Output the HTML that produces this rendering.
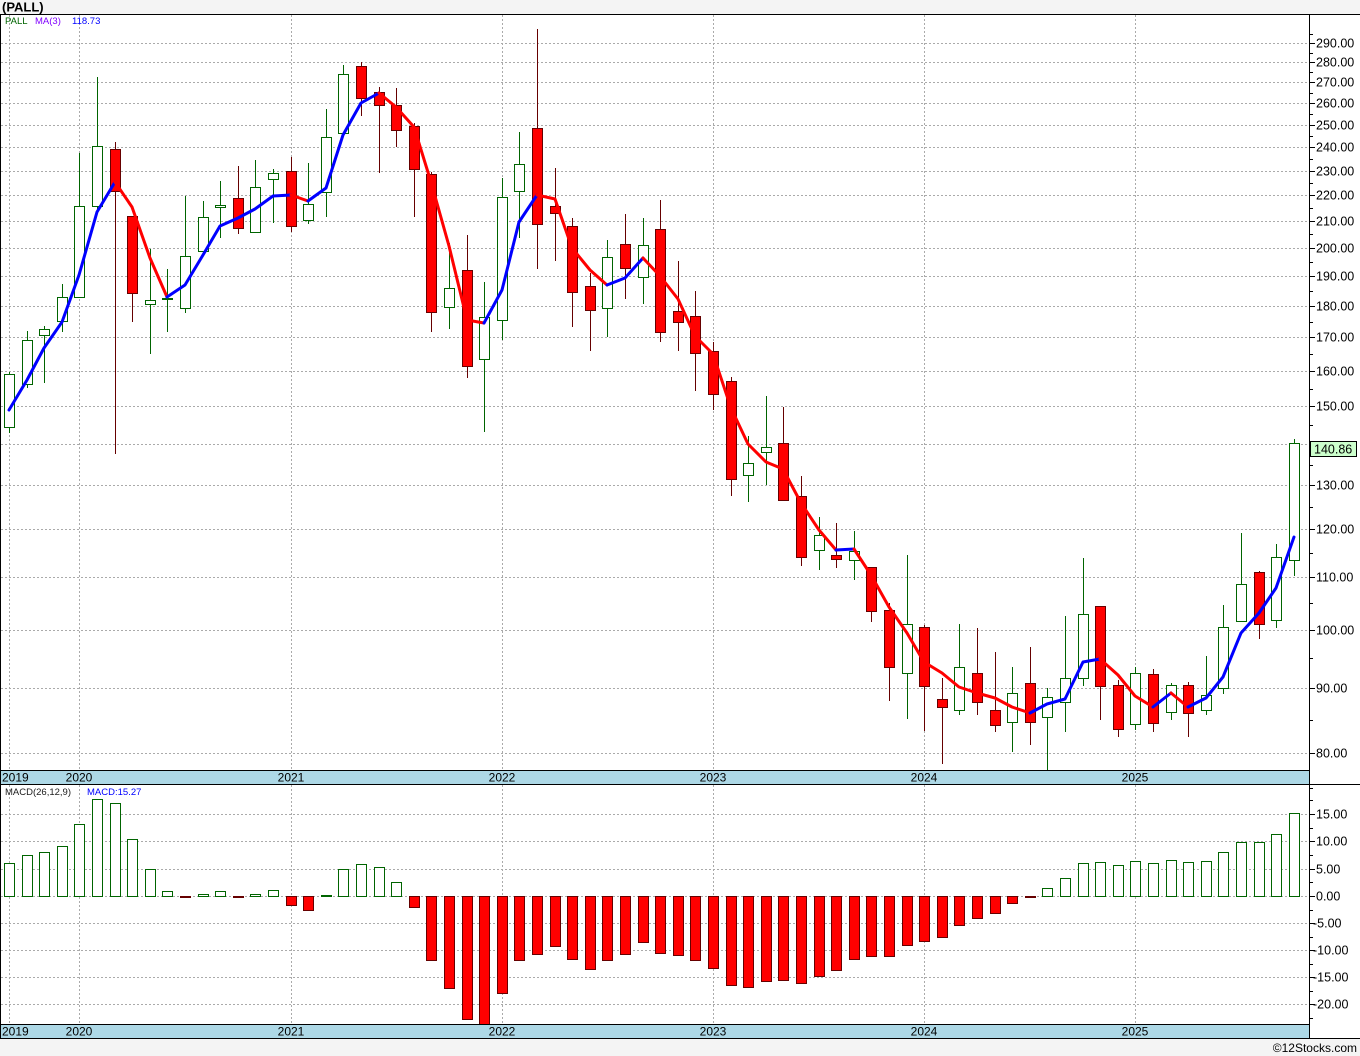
<!DOCTYPE html>
<html><head><meta charset="utf-8"><style>
html,body{margin:0;padding:0;background:#fff;}
svg{display:block;}
text{font-family:"Liberation Sans","DejaVu Sans",sans-serif;}
</style></head><body>
<svg width="1360" height="1056" viewBox="0 0 1360 1056" xmlns="http://www.w3.org/2000/svg">
<rect x="0" y="0" width="1360" height="1056" fill="#fff"/>
<rect x="0" y="0" width="1360" height="14" fill="#f4f4f4"/>
<text x="2" y="11.5" font-size="13" font-weight="bold" fill="#000">(PALL)</text>
<rect x="0" y="1038" width="1360" height="18" fill="#f4f4f4"/>
<text x="1357" y="1052" font-size="12" fill="#000" text-anchor="end">©12Stocks.com</text>

<!-- price grid -->
<g stroke="#aaa" stroke-width="1" stroke-dasharray="2,2">
<path d="M1 753.5H1309 M1 688.5H1309 M1 630.5H1309 M1 577.5H1309 M1 529.5H1309 M1 485.5H1309 M1 444.5H1309 M1 406.5H1309 M1 371.5H1309 M1 337.5H1309 M1 306.5H1309 M1 276.5H1309 M1 248.5H1309 M1 221.5H1309 M1 195.5H1309 M1 171.5H1309 M1 147.5H1309 M1 125.5H1309 M1 103.5H1309 M1 82.5H1309 M1 62.5H1309 M1 43.5H1309"/>
<path d="M9.5 15V770 M79.5 15V770 M291.5 15V770 M502.5 15V770 M713.5 15V770 M924.5 15V770 M1135.5 15V770"/>
<path d="M1 814.5H1309 M1 841.5H1309 M1 869.5H1309 M1 896.5H1309 M1 923.5H1309 M1 950.5H1309 M1 977.5H1309 M1 1004.5H1309"/>
<path d="M9.5 785V1024 M79.5 785V1024 M291.5 785V1024 M502.5 785V1024 M713.5 785V1024 M924.5 785V1024 M1135.5 785V1024"/>
</g>

<!-- candles wicks -->
<path fill="none" stroke="#006400" stroke-width="1" d="M9.5 372V433 M27.5 331V388 M44.5 326V383 M62.5 284V332 M79.5 153V297 M97.5 77V210 M150.5 249V354 M167.5 269V332 M185.5 196V313 M203.5 201V255 M220.5 181V238 M255.5 160V232 M273.5 169V223 M308.5 163V224 M326.5 109V217 M343.5 65V133 M449.5 243V329 M484.5 282V432 M502.5 178V340 M519.5 132V238 M607.5 240V337 M643.5 218V304 M748.5 436V502 M766.5 396V485 M819.5 517V570 M854.5 531V580 M907.5 555V719 M959.5 624V715 M1012.5 667V752 M1047.5 688V770 M1065.5 616V732 M1083.5 558V686 M1135.5 667V730 M1171.5 683V720 M1206.5 656V715 M1223.5 605V694 M1241.5 533V621 M1276.5 544V628 M1294.5 439V576"/>
<path fill="none" stroke="#660000" stroke-width="1" d="M115.5 142V454 M132.5 216V322 M238.5 166V234 M291.5 157V232 M361.5 62V116 M379.5 87V173 M396.5 88V147 M414.5 123V217 M431.5 172V332 M467.5 235V378 M537.5 29V269 M555.5 168V261 M572.5 218V327 M590.5 273V351 M625.5 214V299 M660.5 200V342 M678.5 261V351 M695.5 291V391 M713.5 342V410 M731.5 377V496 M783.5 407V501 M801.5 476V566 M836.5 523V568 M871.5 567V622 M889.5 603V701 M924.5 625V731 M942.5 678V764 M977.5 628V715 M995.5 652V732 M1030.5 647V745 M1100.5 606V720 M1118.5 680V737 M1153.5 669V732 M1188.5 682V737 M1259.5 571V639"/>

<!-- green bodies -->
<g fill="#fff" stroke="#006400" stroke-width="1">
<rect x="4.5" y="374.5" width="10" height="53"/>
<rect x="22.5" y="340.5" width="10" height="44"/>
<rect x="39.5" y="329.5" width="10" height="6"/>
<rect x="57.5" y="297.5" width="10" height="24"/>
<rect x="74.5" y="206.5" width="10" height="91"/>
<rect x="92.5" y="146.5" width="10" height="60"/>
<rect x="145.5" y="300.5" width="10" height="4"/>
<rect x="162.5" y="298.5" width="10" height="1"/>
<rect x="180.5" y="256.5" width="10" height="52"/>
<rect x="198.5" y="217.5" width="10" height="34"/>
<rect x="215.5" y="205.5" width="10" height="2"/>
<rect x="250.5" y="187.5" width="10" height="45"/>
<rect x="268.5" y="173.5" width="10" height="6"/>
<rect x="303.5" y="204.5" width="10" height="16"/>
<rect x="321.5" y="137.5" width="10" height="55"/>
<rect x="338.5" y="74.5" width="10" height="59"/>
<rect x="444.5" y="288.5" width="10" height="19"/>
<rect x="479.5" y="317.5" width="10" height="42"/>
<rect x="497.5" y="197.5" width="10" height="123"/>
<rect x="514.5" y="164.5" width="10" height="27"/>
<rect x="602.5" y="257.5" width="10" height="51"/>
<rect x="638.5" y="245.5" width="10" height="32"/>
<rect x="743.5" y="463.5" width="10" height="12"/>
<rect x="761.5" y="447.5" width="10" height="5"/>
<rect x="814.5" y="535.5" width="10" height="15"/>
<rect x="849.5" y="551.5" width="10" height="9"/>
<rect x="902.5" y="624.5" width="10" height="49"/>
<rect x="954.5" y="667.5" width="10" height="43"/>
<rect x="1007.5" y="693.5" width="10" height="29"/>
<rect x="1042.5" y="697.5" width="10" height="20"/>
<rect x="1060.5" y="678.5" width="10" height="24"/>
<rect x="1078.5" y="614.5" width="10" height="64"/>
<rect x="1130.5" y="673.5" width="10" height="51"/>
<rect x="1166.5" y="685.5" width="10" height="27"/>
<rect x="1201.5" y="695.5" width="10" height="15"/>
<rect x="1218.5" y="627.5" width="10" height="61"/>
<rect x="1236.5" y="584.5" width="10" height="37"/>
<rect x="1271.5" y="557.5" width="10" height="63"/>
<rect x="1289.5" y="443.5" width="10" height="117"/>
</g>
<!-- red bodies -->
<g fill="#ff0000" stroke="#660000" stroke-width="1">
<rect x="110.5" y="149.5" width="10" height="42"/>
<rect x="127.5" y="216.5" width="10" height="77"/>
<rect x="233.5" y="198.5" width="10" height="30"/>
<rect x="286.5" y="171.5" width="10" height="55"/>
<rect x="356.5" y="66.5" width="10" height="32"/>
<rect x="374.5" y="92.5" width="10" height="13"/>
<rect x="391.5" y="105.5" width="10" height="25"/>
<rect x="409.5" y="126.5" width="10" height="43"/>
<rect x="426.5" y="174.5" width="10" height="138"/>
<rect x="462.5" y="270.5" width="10" height="96"/>
<rect x="532.5" y="128.5" width="10" height="96"/>
<rect x="550.5" y="206.5" width="10" height="7"/>
<rect x="567.5" y="226.5" width="10" height="66"/>
<rect x="585.5" y="286.5" width="10" height="24"/>
<rect x="620.5" y="244.5" width="10" height="24"/>
<rect x="655.5" y="229.5" width="10" height="103"/>
<rect x="673.5" y="311.5" width="10" height="11"/>
<rect x="690.5" y="316.5" width="10" height="37"/>
<rect x="708.5" y="351.5" width="10" height="43"/>
<rect x="726.5" y="381.5" width="10" height="98"/>
<rect x="778.5" y="443.5" width="10" height="57"/>
<rect x="796.5" y="496.5" width="10" height="61"/>
<rect x="831.5" y="555.5" width="10" height="4"/>
<rect x="866.5" y="567.5" width="10" height="44"/>
<rect x="884.5" y="610.5" width="10" height="57"/>
<rect x="919.5" y="627.5" width="10" height="59"/>
<rect x="937.5" y="699.5" width="10" height="8"/>
<rect x="972.5" y="673.5" width="10" height="29"/>
<rect x="990.5" y="710.5" width="10" height="15"/>
<rect x="1025.5" y="683.5" width="10" height="39"/>
<rect x="1095.5" y="606.5" width="10" height="80"/>
<rect x="1113.5" y="685.5" width="10" height="44"/>
<rect x="1148.5" y="674.5" width="10" height="49"/>
<rect x="1183.5" y="685.5" width="10" height="28"/>
<rect x="1254.5" y="572.5" width="10" height="52"/>
</g>

<!-- MA(3) -->
<g fill="none" stroke-width="3" stroke-linejoin="round" stroke-linecap="round">
<polyline stroke="#0000ff" points="9,410 27,380 44,348 62,322 79,275 97,212 115,182"/>
<polyline stroke="#ff0000" points="115,182 132,207 150,258 167,297"/>
<polyline stroke="#0000ff" points="167,297 185,285 203,255 220,226 238,218 255,209 273,196 291,195"/>
<polyline stroke="#ff0000" points="291,195 308,201"/>
<polyline stroke="#0000ff" points="308,201 326,188 343,135 361,103 379,93"/>
<polyline stroke="#ff0000" points="379,93 396,107 414,127 431,182 449,246 467,320 484,323"/>
<polyline stroke="#0000ff" points="484,323 502,290 519,222 537,195"/>
<polyline stroke="#ff0000" points="537,195 555,199 572,248 590,270 607,285"/>
<polyline stroke="#0000ff" points="607,285 625,278 643,258"/>
<polyline stroke="#ff0000" points="643,258 660,276 678,299 695,336 713,354 731,408 748,444 766,462 783,469 801,503 819,530 836,550"/>
<polyline stroke="#0000ff" points="836,550 854,549"/>
<polyline stroke="#ff0000" points="854,549 871,575 889,607 907,633 924,662 942,673 959,687 977,693 995,698 1012,707 1030,713"/>
<polyline stroke="#0000ff" points="1030,713 1047,704 1065,699 1083,662 1100,659"/>
<polyline stroke="#ff0000" points="1100,659 1118,675 1135,696 1153,707"/>
<polyline stroke="#0000ff" points="1153,707 1171,693"/>
<polyline stroke="#ff0000" points="1171,693 1188,707"/>
<polyline stroke="#0000ff" points="1188,707 1206,698 1223,677 1241,633 1259,613 1276,588 1294,537"/>
</g>

<text x="5" y="24" font-size="9.5" fill="#006400">PALL</text>
<text x="35" y="24" font-size="9.5" fill="#8000ff">MA(3)</text>
<text x="72" y="24" font-size="9.5" fill="#0000ff">118.73</text>

<!-- MACD bars -->
<g fill="#fff" stroke="#006400" stroke-width="1">
<rect x="4.5" y="863.5" width="10" height="33"/>
<rect x="22.5" y="855.5" width="10" height="41"/>
<rect x="39.5" y="852.5" width="10" height="44"/>
<rect x="57.5" y="846.5" width="10" height="50"/>
<rect x="74.5" y="824.5" width="10" height="72"/>
<rect x="92.5" y="799.5" width="10" height="97"/>
<rect x="110.5" y="803.5" width="10" height="93"/>
<rect x="127.5" y="839.5" width="10" height="57"/>
<rect x="145.5" y="869.5" width="10" height="27"/>
<rect x="162.5" y="891.5" width="10" height="5"/>
<rect x="198.5" y="894.5" width="10" height="2"/>
<rect x="215.5" y="891.5" width="10" height="5"/>
<rect x="250.5" y="894.5" width="10" height="2"/>
<rect x="268.5" y="890.5" width="10" height="6"/>
<rect x="321.5" y="895.5" width="10" height="1"/>
<rect x="338.5" y="869.5" width="10" height="27"/>
<rect x="356.5" y="864.5" width="10" height="32"/>
<rect x="374.5" y="867.5" width="10" height="29"/>
<rect x="391.5" y="882.5" width="10" height="14"/>
<rect x="1042.5" y="888.5" width="10" height="8"/>
<rect x="1060.5" y="878.5" width="10" height="18"/>
<rect x="1078.5" y="863.5" width="10" height="33"/>
<rect x="1095.5" y="862.5" width="10" height="34"/>
<rect x="1113.5" y="865.5" width="10" height="31"/>
<rect x="1130.5" y="861.5" width="10" height="35"/>
<rect x="1148.5" y="863.5" width="10" height="33"/>
<rect x="1166.5" y="860.5" width="10" height="36"/>
<rect x="1183.5" y="862.5" width="10" height="34"/>
<rect x="1201.5" y="861.5" width="10" height="35"/>
<rect x="1218.5" y="852.5" width="10" height="44"/>
<rect x="1236.5" y="842.5" width="10" height="54"/>
<rect x="1254.5" y="842.5" width="10" height="54"/>
<rect x="1271.5" y="834.5" width="10" height="62"/>
<rect x="1289.5" y="813.5" width="10" height="83"/>
</g>
<g fill="#ff0000" stroke="#660000" stroke-width="1">
<rect x="180.5" y="896.5" width="10" height="1"/>
<rect x="233.5" y="896.5" width="10" height="1"/>
<rect x="286.5" y="896.5" width="10" height="9"/>
<rect x="303.5" y="896.5" width="10" height="14"/>
<rect x="409.5" y="896.5" width="10" height="11"/>
<rect x="426.5" y="896.5" width="10" height="64"/>
<rect x="444.5" y="896.5" width="10" height="92"/>
<rect x="462.5" y="896.5" width="10" height="123"/>
<rect x="479.5" y="896.5" width="10" height="128"/>
<rect x="497.5" y="896.5" width="10" height="97"/>
<rect x="514.5" y="896.5" width="10" height="64"/>
<rect x="532.5" y="896.5" width="10" height="58"/>
<rect x="550.5" y="896.5" width="10" height="50"/>
<rect x="567.5" y="896.5" width="10" height="63"/>
<rect x="585.5" y="896.5" width="10" height="73"/>
<rect x="602.5" y="896.5" width="10" height="64"/>
<rect x="620.5" y="896.5" width="10" height="58"/>
<rect x="638.5" y="896.5" width="10" height="46"/>
<rect x="655.5" y="896.5" width="10" height="57"/>
<rect x="673.5" y="896.5" width="10" height="59"/>
<rect x="690.5" y="896.5" width="10" height="64"/>
<rect x="708.5" y="896.5" width="10" height="72"/>
<rect x="726.5" y="896.5" width="10" height="89"/>
<rect x="743.5" y="896.5" width="10" height="91"/>
<rect x="761.5" y="896.5" width="10" height="85"/>
<rect x="778.5" y="896.5" width="10" height="84"/>
<rect x="796.5" y="896.5" width="10" height="87"/>
<rect x="814.5" y="896.5" width="10" height="80"/>
<rect x="831.5" y="896.5" width="10" height="74"/>
<rect x="849.5" y="896.5" width="10" height="63"/>
<rect x="866.5" y="896.5" width="10" height="60"/>
<rect x="884.5" y="896.5" width="10" height="60"/>
<rect x="902.5" y="896.5" width="10" height="49"/>
<rect x="919.5" y="896.5" width="10" height="45"/>
<rect x="937.5" y="896.5" width="10" height="41"/>
<rect x="954.5" y="896.5" width="10" height="29"/>
<rect x="972.5" y="896.5" width="10" height="22"/>
<rect x="990.5" y="896.5" width="10" height="17"/>
<rect x="1007.5" y="896.5" width="10" height="7"/>
<rect x="1025.5" y="896.5" width="10" height="1"/>
</g>
<text x="5" y="795" font-size="9.5" fill="#202020">MACD(26,12,9)</text>
<text x="87" y="795" font-size="9.5" fill="#0000ff">MACD:15.27</text>

<!-- date strips -->
<rect x="0" y="770" width="1309" height="14" fill="#add8e6"/>
<rect x="0" y="1024" width="1309" height="14" fill="#add8e6"/>
<g font-size="12" fill="#000">
<text x="2" y="781.5">2019</text><text x="79" y="781.5" text-anchor="middle">2020</text><text x="291" y="781.5" text-anchor="middle">2021</text><text x="502" y="781.5" text-anchor="middle">2022</text><text x="713" y="781.5" text-anchor="middle">2023</text><text x="924" y="781.5" text-anchor="middle">2024</text><text x="1135" y="781.5" text-anchor="middle">2025</text>
<text x="2" y="1035.5">2019</text><text x="79" y="1035.5" text-anchor="middle">2020</text><text x="291" y="1035.5" text-anchor="middle">2021</text><text x="502" y="1035.5" text-anchor="middle">2022</text><text x="713" y="1035.5" text-anchor="middle">2023</text><text x="924" y="1035.5" text-anchor="middle">2024</text><text x="1135" y="1035.5" text-anchor="middle">2025</text>
</g>

<!-- frame lines -->
<g stroke="#000" stroke-width="1" fill="none">
<path d="M0 14.5H1360 M0 770.5H1309 M0 784.5H1360 M0 1024.5H1309 M0 1038.5H1360 M0.5 14V1038 M1309.5 14V1038"/>
<path d="M1309 753.5h6 M1309 688.5h6 M1309 630.5h6 M1309 577.5h6 M1309 529.5h6 M1309 485.5h6 M1309 444.5h6 M1309 406.5h6 M1309 371.5h6 M1309 337.5h6 M1309 306.5h6 M1309 276.5h6 M1309 248.5h6 M1309 221.5h6 M1309 195.5h6 M1309 171.5h6 M1309 147.5h6 M1309 125.5h6 M1309 103.5h6 M1309 82.5h6 M1309 62.5h6 M1309 43.5h6"/>
<path d="M1309 720.5h4 M1309 658.5h4 M1309 603.5h4 M1309 553.5h4 M1309 507.5h4 M1309 465.5h4 M1309 425.5h4 M1309 389.5h4 M1309 354.5h4 M1309 322.5h4 M1309 291.5h4 M1309 262.5h4 M1309 234.5h4 M1309 208.5h4 M1309 183.5h4 M1309 159.5h4 M1309 136.5h4 M1309 114.5h4 M1309 93.5h4 M1309 72.5h4 M1309 53.5h4 M1309 34.5h4 M1309 788.5h4"/>
<path d="M1309 814.5h6 M1309 841.5h6 M1309 869.5h6 M1309 896.5h6 M1309 923.5h6 M1309 950.5h6 M1309 977.5h6 M1309 1004.5h6 M1309 800.5h4 M1309 828.5h4 M1309 855.5h4 M1309 882.5h4 M1309 910.5h4 M1309 937.5h4 M1309 964.5h4 M1309 991.5h4 M1309 1018.5h4"/>
</g>

<!-- price labels -->
<g font-size="12.5" fill="#000">
<text x="1316" y="757.5">80.00</text>
<text x="1316" y="692.5">90.00</text>
<text x="1316" y="634.5">100.00</text>
<text x="1316" y="581.5">110.00</text>
<text x="1316" y="533.5">120.00</text>
<text x="1316" y="489.5">130.00</text>
<text x="1316" y="410.5">150.00</text>
<text x="1316" y="375.5">160.00</text>
<text x="1316" y="341.5">170.00</text>
<text x="1316" y="310.5">180.00</text>
<text x="1316" y="280.5">190.00</text>
<text x="1316" y="252.5">200.00</text>
<text x="1316" y="225.5">210.00</text>
<text x="1316" y="199.5">220.00</text>
<text x="1316" y="175.5">230.00</text>
<text x="1316" y="151.5">240.00</text>
<text x="1316" y="129.5">250.00</text>
<text x="1316" y="107.5">260.00</text>
<text x="1316" y="86.5">270.00</text>
<text x="1316" y="66.5">280.00</text>
<text x="1316" y="47.5">290.00</text>
</g>
<rect x="1310.5" y="441.5" width="46" height="15" fill="#ccffcc" stroke="#000" stroke-width="1"/>
<text x="1314" y="453.5" font-size="12.5" fill="#000">140.86</text>

<g font-size="12.5" fill="#000">
<text x="1316" y="818.5">15.00</text>
<text x="1316" y="845.5">10.00</text>
<text x="1316" y="873.5">5.00</text>
<text x="1316" y="900.5">0.00</text>
<text x="1313" y="927.5">-5.00</text>
<text x="1313" y="954.5">-10.00</text>
<text x="1313" y="981.5">-15.00</text>
<text x="1313" y="1008.5">-20.00</text>
</g>
</svg>
</body></html>
